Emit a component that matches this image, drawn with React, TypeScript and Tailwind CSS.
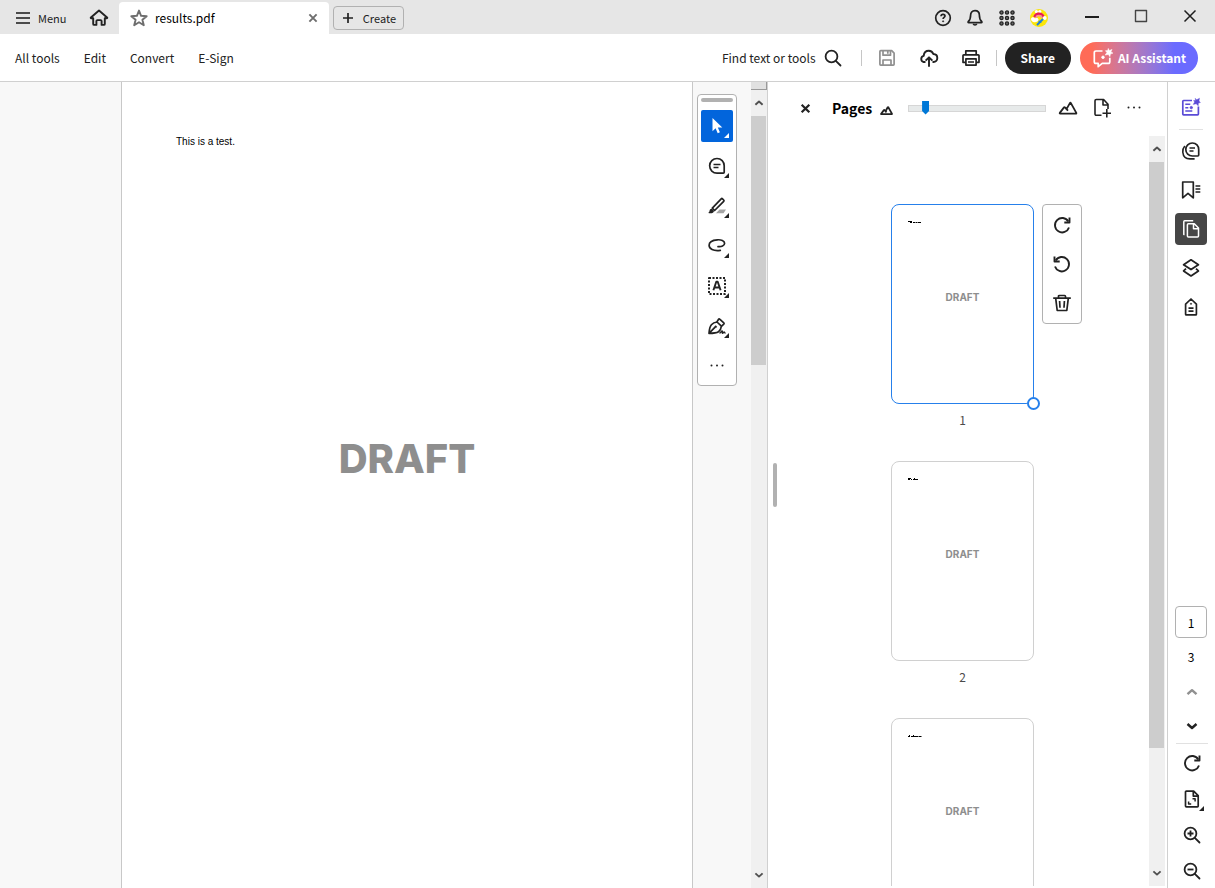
import React from "react";
import clsx from "clsx";

type IconProps = {
  size?: number;
  stroke?: number;
  className?: string;
  children: React.ReactNode;
};

// Base wrapper: 20x20 grid, stroke icons
const Icon = ({ size = 20, stroke = 1.7, className, children }: IconProps) => (
  <svg
    width={size}
    height={size}
    viewBox="0 0 20 20"
    fill="none"
    stroke="currentColor"
    strokeWidth={stroke}
    strokeLinejoin="round"
    className={clsx("shrink-0", className)}
    aria-hidden="true"
  >
    {children}
  </svg>
);

const MenuIcon = () => (
  <Icon stroke={2} className="text-[#4b4b4b]">
    <path d="M3 5h14M3 10h14M3 15h14" />
  </Icon>
);

const HomeIcon = () => (
  <Icon stroke={1.9}>
    <path d="M10 2.6 1.9 9.4c-.4.4-.2.9.4.9h1.9v5.6c0 .6.4 1 1 1h2.2v-3.8a1 1 0 0 1 1-1h3.2a1 1 0 0 1 1 1v3.8h2.2c.6 0 1-.4 1-1v-5.6h1.9c.6 0 .8-.5.4-.9L10 2.6Z" />
  </Icon>
);

const StarIcon = () => (
  <Icon stroke={1.9} className="text-[#6e6e6e]">
    <path d="m10 2.6 2.1 5.2 5.6.4-4.3 3.6 1.4 5.4-4.8-3-4.8 3 1.4-5.4-4.3-3.6 5.6-.4L10 2.6Z" />
  </Icon>
);

const HelpIcon = () => (
  <Icon>
    <circle cx="10" cy="10" r="7.3" />
    <path d="M8 8.2c.1-1.2.9-1.8 2-1.8 1.2 0 2 .7 2 1.7 0 1.3-1.9 1.4-1.9 2.9" />
    <circle cx="10.1" cy="13.3" r=".6" fill="currentColor" strokeWidth=".7" />
  </Icon>
);

const BellIcon = () => (
  <Icon>
    <path d="M10 2.6c-3 0-4.4 2.2-4.4 4.7 0 3.6-.8 5-2.3 6.2-.5.5-.3 1.1.4 1.1h12.600c.7 0 .9-.6.4-1.100-1.5-1.2-2.3-2.6-2.3-6.2 0-2.500-1.400-4.700-4.400-4.700Z" />
    <path d="M8.3 15.8a1.8 1.800 0 0 0 3.400 0" />
  </Icon>
);

const GridIcon = () => (
  <Icon stroke={1.3}>
    {[4.5, 10, 15.5].map((y) =>
      [4.5, 10, 15.5].map((x) => (
        <circle key={`${x}-${y}`} cx={x} cy={y} r="1.6" fill="#6a6a6a" />
      ))
    )}
  </Icon>
);

const Avatar = () => (
  <svg width="18" height="18" viewBox="0 0 18 18" aria-hidden="true">
    <circle cx="9" cy="9" r="9" fill="#fbe60a" />
    <circle cx="6.4" cy="2.6" r="1.6" fill="#fff" />
    <circle cx="9.8" cy="2.6" r="1.6" fill="#fff" />
    <path d="M4.500 8.200a4.500 3.600 0 0 1 9 0" fill="none" stroke="#e8175d" strokeWidth="2.200" />
    <path d="M6.200 9a2.800 2.400 0 0 1 5.600 0" fill="none" stroke="#f58aa8" strokeWidth="1.400" />
    <path d="M1 9.500c1.200-2 3-1.500 4 0 1.500-.8 3.500-.5 3.500 1.300S6 13.500 4 13.200 1 11.500 1 9.500Z" fill="#fff" />
    <circle cx="14.800" cy="9" r="1.900" fill="#fff" />
    <path d="m7 16 6-6M8.500 12.500l3 .5" stroke="#1e7fe0" strokeWidth="2" />
  </svg>
);

const SearchIcon = () => (
  <Icon stroke={1.8}>
    <circle cx="8.5" cy="8.5" r="5.9" />
    <path d="m12.8 12.8 4.7 4.7" strokeLinecap="round" />
  </Icon>
);

const SaveIcon = () => (
  <Icon className="text-[#909090]">
    <path d="M2.900 3.500c0-.5.300-.8.800-.8h11l2.400 2.400v11.200c0 .5-.3.800-.8.800H3.700c-.5 0-.8-.3-.8-.8V3.500Z" />
    <path d="M6 2.800v4.400h7.500V2.800M10.800 3v2.800M6 17v-5h8v5" />
  </Icon>
);

const CloudIcon = () => (
  <Icon stroke={1.9}>
    <path d="M6.500 14H4.600A3.200 3.200 0 0 1 4.700 7.800C5 4.900 7 2.800 9.800 2.800c2.200 0 3.800 1.200 4.500 3.200 2.500.1 4 1.700 4 4 0 2.300-1.600 4-3.800 4h-1" />
    <path d="M10 18.800V9.500M6.600 12.700 10 9.300l3.400 3.400" />
  </Icon>
);

const PrinterIcon = () => (
  <Icon>
    <path d="M4.800 6.800V2.900h10.400v3.900M4.800 14.300H2V7.600c0-.5.300-.8.800-.8h14.400c.5 0 .8.300.8.800v6.700h-2.800" />
    <path d="M4.900 10.800h10.200v6.300H4.900zM7 14h6" />
  </Icon>
);

const AssistantIcon = () => (
  <svg width="22" height="22" viewBox="0 0 22 22" fill="none" stroke="currentColor" strokeWidth="1.7" strokeLinejoin="round" className="shrink-0" aria-hidden="true">
    <path d="M10.500 4H4c-1.100 0-1.700.6-1.700 1.700v9c0 1.100.6 1.700 1.700 1.700h2.200v3.300l4-3.300h5.900c1.100 0 1.700-.6 1.700-1.700v-4" />
    <path d="m16.300 1.400 1 2.200 2.700-1.200-1.100 2.700 2.100 1-2.600 1-.5 2.600-1.500-2.300-3.200.7 1.700-2.600-1.500-1.800 2.300-.2.600-2.100Z" fill="currentColor" strokeWidth=".5" />
    <circle cx="11" cy="10.300" r="1.300" fill="currentColor" strokeWidth=".8" />
  </svg>
);

const CommentIcon = () => (
  <Icon>
    <path d="M10 2.500a7.300 7.300 0 1 0 0 14.700h6.300c.6 0 .9-.3.900-.9V9.800c0-4.200-3-7.300-7.200-7.300Z" />
    <path d="M6.500 8.500h7M6.500 11.500h5" />
  </Icon>
);

const HighlightIcon = () => (
  <Icon>
    <path d="M9 17.200 12.500 13.500H19l-2.500 3.700H9Z" fill="#a5a5a5" stroke="none" />
    <path d="m5.300 12.200 8.900-9.400c.4-.4.900-.4 1.300 0l1.200 1.200c.4.400.4.900 0 1.300L7.600 14.500l-2.300-2.300Z" />
    <path d="M4.800 12.800c-1.800.2-2.200 1.200-2.400 2.600l-1.100 1.600c1.500.5 3.400.5 4.600-.3.900-.6 1.100-1.400 1-2l-2.100-1.900Z" fill="currentColor" stroke="none" />
  </Icon>
);

const LassoIcon = () => (
  <Icon>
    <path d="M11 10.600c3.300.5 6.600-.8 6.600-3.300 0-2.700-3.600-3.800-7.300-3.500-4.600.3-8.200 2.200-8.200 5.500 0 3.700 4.200 6 11.200 5.100" strokeLinecap="round" />
  </Icon>
);

const TextSelectIcon = () => (
  <Icon>
    <rect x="2" y="2" width="16" height="16" strokeDasharray="2 1.500" strokeWidth="2" />
    <path d="M6.400 14.300 9.300 5.800h1.400l2.900 8.500M7.400 11.500h5.200" strokeWidth="1.900" />
  </Icon>
);

const PenIcon = () => (
  <Icon>
    <path d="M2 17.300c.3-3.500.5-6.500 2.400-8.600C5.700 7.300 7.600 6.300 10 6l4.400 4.200c-.3 2.500-1.300 4.400-2.900 5.500-2.200 1.500-5.400 1.600-9.500 1.600ZM2.200 17.200l5.900-6.100" />
    <path d="m9.800 6 1.800-2.700c.3-.4.700-.5 1.100-.1l4.100 3.700c.4.400.4.800 0 1.200L14.600 10.200" />
    <circle cx="8.700" cy="10.700" r=".9" fill="currentColor" strokeWidth=".6" />
    <path d="M12.500 17.300c1.300-.6 1.900-2.400 2.600-2.300.7.100-.2 2.200.5 2.200s1-1.300 1.700-1.100c.4.200.3 1 1.200 1.100" strokeWidth="1.500" />
  </Icon>
);

const MoreIcon = () => (
  <Icon>
    <g fill="currentColor" stroke="none">
      <circle cx="4.500" cy="9.500" r="1" />
      <circle cx="10" cy="9.500" r="1" />
      <circle cx="15.500" cy="9.500" r="1" />
    </g>
  </Icon>
);

const MountainIcon = ({ size = 20 }: { size?: number }) => (
  <Icon size={size} stroke={size < 20 ? 2.8 : 1.8}>
    <path d="M2.200 15.700c-.5 0-.6-.4-.4-.8L6 9.400c.3-.4.700-.4 1 0l1.500 1.700 3.400-6c.3-.5.700-.5 1 0l5.400 9.800c.2.500 0 .8-.5.800H2.200ZM8.500 11.100l1.500 1.600" />
  </Icon>
);

const InsertPageIcon = () => (
  <Icon stroke={1.6}>
    <path d="M9.500 17.300H4.300c-.8 0-1.300-.5-1.300-1.300V2.800c0-.8.500-1.300 1.300-1.300h7.300l4.400 4.800v4.600M11 1.800V7h4.800M14.800 11v8.500M10.500 15.200H19" />
  </Icon>
);

const RotateIcon = ({ flip = false }: { flip?: boolean }) => (
  <Icon stroke={1.9} className={flip ? "-scale-x-100" : undefined}>
    <path d="M16.300 6.400A7.200 7.200 0 1 0 17 12.500" />
    <path d="M17.500 2.500v5h-5.200" />
  </Icon>
);

const TrashIcon = () => (
  <Icon>
    <path d="M1.200 5.200h17.600M6.500 5V3.400c0-.6.300-.9.900-.9h5.200c.6 0 .9.300.9.900V5M3.700 5.400l1.500 12.100h9.600l1.500-12.100M7.600 8l.4 6.700M12.400 8l-.4 6.700" />
  </Icon>
);

const SummaryIcon = () => (
  <Icon className="text-[#5a4bd6]">
    <path d="M11 3.500H2.600c-.5 0-.8.300-.8.800v12.800c0 .5.300.8.800.8h14c.5 0 .8-.3.800-.8V9.500" />
    <path d="m14.200 1.300 1.500 1.500 2.800-1.600-.5 2.700 1.400 1.600-2 .6-.2 2.700-2-2-3 .6 1.400-2.300-1-1.700 2 .1-.4-2.200Z" fill="currentColor" strokeWidth=".4" />
    <path d="M4.300 7.200h5M4.300 10.700h3M4.300 14h7" strokeWidth="1.500" />
    <circle cx="10.300" cy="10.600" r="1.200" fill="currentColor" strokeWidth=".8" />
  </Icon>
);

const CommentsIcon = () => (
  <Icon>
    <path d="M11.300 2a6.500 6.500 0 1 0 0 13h5.500c.6 0 .9-.3.900-.9V8.600C17.700 4.700 15.200 2 11.300 2Z" />
    <path d="M3.800 5C2.200 6.800 1.600 9 1.800 11.200c.4 4 3.200 6.700 7.200 6.700h4.600M8.500 7h5.500M8.500 10h4" strokeWidth="1.600" />
  </Icon>
);

const BookmarkIcon = () => (
  <Icon>
    <path d="M1.700 2h10.600v15.800L7 13.300l-5.300 4.500V2Z" />
    <path d="M14.500 6h4.800M14.500 9h4.800M14.500 12h4.800" strokeWidth="1.500" />
  </Icon>
);

const PagesIcon = () => (
  <Icon stroke={1.5}>
    <path d="M6.400 5.800c0-.6.400-1 1-1h5.900l4.200 4.300v8c0 .6-.4 1-1 1H7.400c-.6 0-1-.4-1-1V5.800ZM12.500 5v4.800h4.800M3.600 15.500H2.800V2.700c0-.6.300-.9.900-.9h8.500" />
  </Icon>
);

const LayersIcon = () => (
  <Icon stroke={1.8}>
    <path d="m10 1.800 7.400 4.900L10 11.600 2.600 6.700 10 1.800Z" />
    <path d="m5 10.700-2.400 2.200 7.400 5 7.400-5-2.400-2.200" />
  </Icon>
);

const TagIcon = () => (
  <Icon>
    <path d="M4.600 7.200 10 2l5.400 5.200v10c0 .4-.3.700-.7.700H5.300c-.4 0-.7-.3-.7-.7v-10ZM7.500 11.200h5M7.500 14.200h5" />
    <circle cx="10" cy="6.800" r=".7" fill="currentColor" strokeWidth=".5" />
  </Icon>
);

const FitPageIcon = () => (
  <Icon>
    <path d="M3.500 3c0-.6.300-.9.900-.9h7.300l4.500 4.600v10.300c0 .6-.3.900-.9.900H4.400c-.6 0-.9-.3-.9-.9V3ZM11.300 2.300v4.800h4.700" />
    <path d="M10.500 9.800h2.600v2.600M9.200 15H6.600v-2.600" strokeWidth="1.500" />
  </Icon>
);

const ZoomIcon = ({ plus = false }: { plus?: boolean }) => (
  <Icon stroke={1.8}>
    <circle cx="8.500" cy="8.500" r="5.900" />
    <path d="m12.800 12.800 4.700 4.700" strokeLinecap="round" />
    <path d={plus ? "M5.500 8.500h6M8.500 5.500v6" : "M5.500 8.500h6"} />
  </Icon>
);

const Chevron = ({ up = false, size = 20 }: { up?: boolean; size?: number }) => (
  <Icon size={size} stroke={2.4}>
    <path d={up ? "m5.500 12.200 4.500-4 4.500 4" : "m5.500 8 4.500 4 4.500-4"} />
  </Icon>
);

const Cross = ({ size = 20, stroke = 1.7 }: { size?: number; stroke?: number }) => (
  <Icon size={size} stroke={stroke}>
    <path d="m5.500 5.500 9 9M14.500 5.500l-9 9" />
  </Icon>
);

type IconButtonProps = {
  label: string;
  className?: string;
  children: React.ReactNode;
};

const IconButton = ({ label, className, children }: IconButtonProps) => (
  <button
    type="button"
    aria-label={label}
    className={clsx("relative flex size-8 shrink-0 items-center justify-center", className)}
  >
    {children}
  </button>
);

// Small triangle that marks a button with a sub menu
const Corner = () => (
  <svg width="5" height="5" viewBox="0 0 5 5" className="absolute right-1 bottom-1" aria-hidden="true">
    <path d="M5 0v5H0z" fill="currentColor" />
  </svg>
);

const ScrollBar = ({ name, thumb }: { name: string; thumb: string }) => (
  <div className="flex min-h-0 w-4 flex-1 flex-col bg-[#f0f0f0] pr-px text-[#505050]">
    <button type="button" aria-label={`${name} up`} className="flex h-[26px] shrink-0 items-center justify-center">
      <Chevron up size={16} />
    </button>
    <div className="min-h-0 flex-1">
      <div className={clsx("bg-[#cdcdcd]", thumb)} />
    </div>
    <button type="button" aria-label={`${name} down`} className="flex h-[26px] shrink-0 items-center justify-center">
      <Chevron size={16} />
    </button>
  </div>
);

const tools = [
  { label: "Comment", icon: <CommentIcon /> },
  { label: "Highlight", icon: <HighlightIcon /> },
  { label: "Draw", icon: <LassoIcon /> },
  { label: "Select text", icon: <TextSelectIcon /> },
  { label: "Sign", icon: <PenIcon /> },
];

// Page thumbnails; "line" is the shrunken first line of each page
const pages = [
  { id: 1, line: "M0 .5h4M2 1.500h2M5 1.500h2M7.500 1.500h2M10 1.500h3" },
  { id: 2, line: "M0 .5h3M0 1.500h2M3 1.500h1M5 1.500h5M6 .5h1" },
  { id: 3, line: "M0 1.500h2M1 .5h1M3 1.500h7M5 .5h1M10.500 1.500h3" },
];

const TitleBar = () => (
  <header className="flex h-[34px] shrink-0 bg-[#e6e6e6]">
    <button type="button" className="flex w-[79px] items-center gap-[5px] pt-0.5 pl-[13px] text-[11px]">
      <MenuIcon />
      Menu
    </button>
    <button type="button" aria-label="Home" className="flex w-10 items-center justify-center pt-0.5">
      <HomeIcon />
    </button>
    <div className="mt-0.5 flex w-[210px] items-center rounded-t bg-white pr-2 pl-2.5">
      <StarIcon />
      <span className="ml-1.5 flex-1 text-xs text-black">results.pdf</span>
      <button type="button" aria-label="Close tab" className="text-[#6e6e6e]">
        <Cross size={16} stroke={2.4} />
      </button>
    </div>
    <button
      type="button"
      className="mt-1.5 ml-1 flex h-6 w-[71px] items-center justify-between rounded border border-[#b1b1b1] pr-[7px] pl-1 text-[11px]"
    >
      <Icon>
        <path d="M10 5v10M5 10h10" />
      </Icon>
      Create
    </button>
    <div className="ml-auto flex items-center pt-0.5">
      <IconButton label="Help">
        <HelpIcon />
      </IconButton>
      <IconButton label="Notifications">
        <BellIcon />
      </IconButton>
      <IconButton label="Apps">
        <GridIcon />
      </IconButton>
      <IconButton label="Account">
        <Avatar />
      </IconButton>
    </div>
    <div className="ml-3 flex pr-px text-[#1e1e1e]">
      <button type="button" aria-label="Minimize" className="flex w-[49px] items-center justify-center">
        <Icon stroke={2}>
          <path d="M3 10h14" />
        </Icon>
      </button>
      <button type="button" aria-label="Maximize" className="flex w-[49px] items-center justify-center">
        <Icon stroke={1.4} className="text-[#444444]">
          <path d="M4.500 3.500h11v11h-11z" />
        </Icon>
      </button>
      <button type="button" aria-label="Close" className="flex w-[49px] items-center justify-center">
        <Icon stroke={1.5}>
          <path d="m4.500 3.500 11 11M15.500 3.500l-11 11" />
        </Icon>
      </button>
    </div>
  </header>
);

const ToolBar = () => (
  <div className="flex h-12 shrink-0 items-center border-b border-[#d0d0d0] bg-white pr-[17px] pl-[15px] text-xs">
    <nav className="flex gap-6 whitespace-nowrap">
      <button type="button">All tools</button>
      <button type="button">Edit</button>
      <button type="button">Convert</button>
      <button type="button">E-Sign</button>
    </nav>
    <button type="button" className="ml-auto flex items-center gap-[7px] whitespace-nowrap">
      Find text or tools
      <SearchIcon />
    </button>
    <div className="ml-[18px] h-4 w-px bg-[#c6c6c6]" />
    <div className="flex gap-2.5 px-[9px]">
      <IconButton label="Save">
        <SaveIcon />
      </IconButton>
      <IconButton label="Upload to cloud">
        <CloudIcon />
      </IconButton>
      <IconButton label="Print">
        <PrinterIcon />
      </IconButton>
    </div>
    <div className="h-4 w-px bg-[#c6c6c6]" />
    <button type="button" className="ml-2 h-8 rounded-full bg-[#222222] px-4 font-bold text-white">
      Share
    </button>
    <button
      type="button"
      className="ml-[9px] flex h-8 items-center gap-1 rounded-full bg-linear-to-r from-[#ff6b57] from-10% to-[#6b6bff] to-80% px-3 font-bold whitespace-nowrap text-white"
    >
      <AssistantIcon />
      AI Assistant
    </button>
  </div>
);

const DocumentView = () => (
  <section className="flex min-w-0 flex-1 bg-[#f8f8f8]">
    <div className="ml-[121px] min-w-0 flex-1 overflow-hidden border-x border-[#c8c8c8] bg-white pt-[52px]">
      <p className="pl-[54px] font-['Liberation_Sans',sans-serif] text-[10px] leading-4 text-black">This is a test.</p>
      <p className="mt-[285px] text-center font-['Inter',sans-serif] text-[40px] leading-[48px] font-extrabold text-[#8e8e8e]">
        DRAFT
      </p>
    </div>
    <div className="w-[58px] pt-3 pl-1">
      <div className="flex w-10 flex-col items-center gap-2 rounded border border-[#b1b1b1] bg-white py-[3px]">
        <div className="h-1 w-8 rounded-sm bg-[#b1b1b1]" />
        <IconButton label="Select" className="rounded-xs bg-[#0265dc] text-white">
          <Icon>
            <path d="M5.500 2v13.200l3.100-3 2.100 5 2.200-.9-2.100-4.900h4.500L5.500 2Z" fill="currentColor" stroke="none" />
          </Icon>
          <Corner />
        </IconButton>
        {tools.map((tool) => (
          <IconButton key={tool.label} label={tool.label}>
            {tool.icon}
            <Corner />
          </IconButton>
        ))}
        <IconButton label="More tools">
          <MoreIcon />
        </IconButton>
      </div>
    </div>
    <div className="flex flex-col border-r border-[#d0d0d0]">
      <div className="h-2 border-r border-b border-[#9a9a9a] bg-[#e1e1e1]" />
      <ScrollBar name="Scroll document" thumb="h-1/3" />
    </div>
  </section>
);

const PagesPanel = () => (
  <section className="flex w-[399px] shrink-0 bg-white">
    <div className="flex w-[9px] items-center justify-end">
      <div className="h-11 w-1 rounded-xs bg-[#b1b1b1]" />
    </div>
    <div className="flex min-w-0 flex-1 flex-col">
      <div className="flex h-[54px] shrink-0 items-center pr-[17px] pb-0.5 pl-3">
        <IconButton label="Close panel">
          <Cross size={17} stroke={2.6} />
        </IconButton>
        <h2 className="ml-[11px] text-sm font-bold text-black">Pages</h2>
        <span className="mt-1 ml-2">
          <MountainIcon size={13} />
        </span>
        <input
          type="range"
          aria-label="Thumbnail size"
          defaultValue={10}
          className="ml-[15px] h-4 min-w-0 flex-1 appearance-none bg-transparent [&::-webkit-slider-runnable-track]:h-[7px] [&::-webkit-slider-runnable-track]:border [&::-webkit-slider-runnable-track]:border-[#d6d6d6] [&::-webkit-slider-runnable-track]:bg-[#e7eaea] [&::-webkit-slider-thumb]:-mt-[5px] [&::-webkit-slider-thumb]:h-3.5 [&::-webkit-slider-thumb]:w-[7px] [&::-webkit-slider-thumb]:appearance-none [&::-webkit-slider-thumb]:bg-[#0078d7] [&::-webkit-slider-thumb]:[clip-path:polygon(0_0,100%_0,100%_75%,50%_100%,0_75%)]"
        />
        <span className="ml-3">
          <MountainIcon />
        </span>
        <IconButton label="Insert page" className="ml-2">
          <InsertPageIcon />
        </IconButton>
        <IconButton label="More options">
          <MoreIcon />
        </IconButton>
      </div>
      <div className="mr-0.5 mb-0.5 flex min-h-0 flex-1">
        <ol className="flex min-w-0 flex-1 flex-col items-center overflow-auto pt-[68px] pr-px [scrollbar-width:none]">
          {pages.map((page) => (
            <li key={page.id} className="flex w-[143px] shrink-0 flex-col">
              <div
                className={clsx(
                  "relative h-[200px] rounded-lg border",
                  page.id === 1 ? "border-[#2680eb]" : "border-[#d0d0d0]"
                )}
              >
                <svg width="14" height="3" viewBox="0 0 14 3" stroke="#000000" className="mt-4 ml-4" aria-hidden="true">
                  <path d={page.line} />
                </svg>
                <p className="mt-[65px] text-center font-['Inter',sans-serif] text-[10px] leading-4 font-bold text-[#8e8e8e]">
                  DRAFT
                </p>
                {page.id === 1 && (
                  <>
                    <span className="absolute -right-[7px] -bottom-[7px] size-[13px] rounded-full border-2 border-[#2680eb] bg-white" />
                    <div className="absolute -top-px left-full ml-[9px] flex w-10 flex-col items-center gap-[7px] rounded border border-[#b1b1b1] bg-white py-1">
                      <IconButton label="Rotate clockwise">
                        <RotateIcon />
                      </IconButton>
                      <IconButton label="Rotate counterclockwise">
                        <RotateIcon flip />
                      </IconButton>
                      <IconButton label="Delete page">
                        <TrashIcon />
                      </IconButton>
                    </div>
                  </>
                )}
              </div>
              <span className="h-[57px] pt-1.5 text-center text-xs leading-5 text-[#4b4b4b]">{page.id}</span>
            </li>
          ))}
        </ol>
        <div className="flex flex-col">
          <ScrollBar name="Scroll pages" thumb="h-[84%]" />
        </div>
      </div>
    </div>
  </section>
);

const SideRail = () => (
  <aside className="flex w-12 shrink-0 flex-col items-center border-l border-[#d0d0d0] bg-white pt-[9px] pb-px text-xs">
    <div className="flex flex-col items-center pr-px">
      <IconButton label="Generative summary">
        <SummaryIcon />
      </IconButton>
      <div className="mt-1.5 mb-[5px] h-px w-6 shrink-0 bg-[#e1e1e1]" />
      <div className="flex flex-col gap-[7px]">
        <IconButton label="Comments">
          <CommentsIcon />
        </IconButton>
        <IconButton label="Bookmarks">
          <BookmarkIcon />
        </IconButton>
        <IconButton label="Page thumbnails" className="rounded bg-[#464646] text-white">
          <PagesIcon />
        </IconButton>
        <IconButton label="Layers">
          <LayersIcon />
        </IconButton>
        <IconButton label="Tags">
          <TagIcon />
        </IconButton>
      </div>
    </div>
    <div className="mt-auto flex flex-col items-center pr-px">
      <input
        type="text"
        aria-label="Page number"
        defaultValue="1"
        className="size-8 rounded border border-[#b1b1b1] text-center text-black"
      />
      <span className="leading-[38px] text-black">3</span>
    </div>
    <div className="flex flex-col gap-0.5">
      <IconButton label="Previous page" className="text-[#909090]">
        <Chevron up />
      </IconButton>
      <IconButton label="Next page">
        <Chevron />
      </IconButton>
    </div>
    <div className="mt-px mb-[3px] h-px w-8 shrink-0 bg-[#e1e1e1]" />
    <div className="flex flex-col gap-1">
      <IconButton label="Rotate view">
        <RotateIcon />
      </IconButton>
      <IconButton label="Fit page">
        <FitPageIcon />
        <Corner />
      </IconButton>
      <IconButton label="Zoom in">
        <ZoomIcon plus />
      </IconButton>
      <IconButton label="Zoom out">
        <ZoomIcon />
      </IconButton>
    </div>
  </aside>
);

const App = () => {
  return (
    <div className="flex h-screen flex-col overflow-hidden bg-white font-['Noto_Sans_CJK_JP',sans-serif] text-[#222222]">
      <TitleBar />
      <ToolBar />
      <main className="flex min-h-0 flex-1">
        <DocumentView />
        <PagesPanel />
        <SideRail />
      </main>
    </div>
  );
};

export default App;
